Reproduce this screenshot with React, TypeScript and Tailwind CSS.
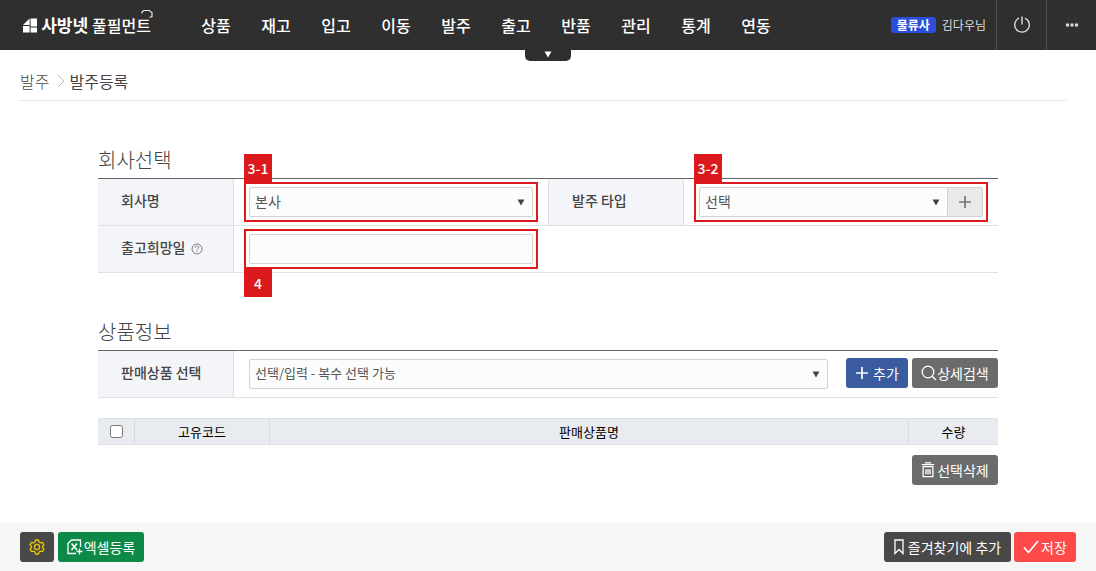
import { useState } from "react";
import type { ReactNode } from "react";

const menus = ["상품", "재고", "입고", "이동", "발주", "출고", "반품", "관리", "통계", "연동"];

// ----------------------------- icons -----------------------------
const LogoMark = () => (
  <svg width="15" height="15" viewBox="0 0 15 15" fill="#fff" aria-hidden="true">
    <path d="M7 0v7H0z" />
    <path d="M8 0h7v8.500H8zM0 8h7v7H0zM8 9.500h7V15H8z" />
  </svg>
);

const LogoCap = () => (
  <svg className="absolute -top-1 -right-0.5" width="12" height="10" viewBox="0 0 12 10" fill="none" stroke="#e5e5e5" strokeWidth="1.200" aria-hidden="true">
    <path d="M1 4.500V3L2.800 1.500h5.400L11 3.500v4L8.500 8.500" />
  </svg>
);

const PowerIcon = () => (
  <svg width="18" height="18" viewBox="0 0 18 18" fill="none" stroke="#ddd" strokeWidth="1.4" aria-hidden="true">
    <path d="M6 2.200a7.300 7.300 0 1 0 6 0M9 .5v8" />
  </svg>
);

const MoreIcon = () => (
  <svg width="14" height="4" viewBox="0 0 14 4" fill="#ddd" aria-hidden="true">
    <path d="M1 .5h3v3H1zM5.500.5h3v3h-3zM10 .5h3v3h-3z" />
  </svg>
);

const HelpIcon = () => (
  <svg className="mt-1" width="12" height="12" viewBox="0 0 12 12" fill="none" stroke="#808080" aria-hidden="true">
    <circle cx="6" cy="6" r="5" />
    <path d="M4.300 4.800c0-2.300 3.400-2.200 3.400-.3C7.700 5.700 6 5.700 6 7.200M6 8.200v1" />
  </svg>
);

const PlusIcon = () => (
  <svg width="14" height="14" viewBox="0 0 14 14" fill="none" stroke="currentColor" strokeWidth="1.700" aria-hidden="true">
    <path d="M7 1v12M1 7h12" />
  </svg>
);

const SearchIcon = () => (
  <svg width="16" height="16" viewBox="0 0 16 16" fill="none" stroke="currentColor" strokeWidth="1.300" aria-hidden="true">
    <circle cx="7" cy="7" r="5.800" />
    <path d="M11.200 11.200l3.800 3.800" />
  </svg>
);

const TrashIcon = () => (
  <svg width="14" height="16" viewBox="0 0 14 16" fill="none" stroke="currentColor" strokeWidth="1.300" aria-hidden="true">
    <path d="M.8 2.700h12.400M4 .9h6M2.100 4.700h9.800v10H2.100zM5 7.200v5M7 7.200v5M9 7.200v5" />
  </svg>
);

const GearIcon = () => (
  <svg width="16" height="16" viewBox="0 0 16 16" fill="none" stroke="#e8c500" strokeWidth="1.300" strokeLinejoin="round" aria-hidden="true">
    <path d="M6.500 1h3l.5 2 1.500.9 2-.6L15 5.800 13.600 7.200v1.600L15 10.200l-1.500 2.500-2-.6-1.500.9-.5 2h-3L6 13l-1.500-.9-2 .6L1 10.200l1.400-1.400V7.200L1 5.800l1.500-2.500 2 .6L6 3z" />
    <circle cx="8" cy="8" r="2.600" />
  </svg>
);

const ExcelIcon = () => (
  <svg width="16" height="16" viewBox="0 0 16 16" fill="none" stroke="currentColor" strokeWidth="1.300" aria-hidden="true">
    <path d="M13.500 8V1H4.500L1 4.500V14.500h8M12.500 9.500v6M9.500 12.500h6" />
    <path d="M4.500 4.500l5.500 6.500M10 4.500L4.500 11" strokeWidth="1.600" />
  </svg>
);

const BookmarkIcon = () => (
  <svg width="10" height="16" viewBox="0 0 10 16" fill="none" stroke="currentColor" strokeWidth="1.300" aria-hidden="true">
    <path d="M1 1h8v13.500L5 10.500l-4 4z" />
  </svg>
);

const CheckIcon = () => (
  <svg width="16" height="14" viewBox="0 0 16 14" fill="none" stroke="currentColor" strokeWidth="1.700" aria-hidden="true">
    <path d="M1 7.500L5.500 12.500 15 1" />
  </svg>
);

const CaretDown = ({ className = "" }: { className?: string }) => (
  <svg className={className} width="8" height="7" viewBox="0 0 8 7" aria-hidden="true">
    <path d="M.5.5h7L4 6.500z" fill="currentColor" />
  </svg>
);

// ----------------------------- parts -----------------------------
interface SelectBoxProps {
  id: string;
  options: string[];
  className?: string;
}

function SelectBox({ id, options, className = "text-sm" }: SelectBoxProps) {
  return (
    <div className="relative min-w-0 flex-1">
      <select
        id={id}
        className={`block h-[30px] w-full appearance-none rounded-xs border border-[#d3d3d3] bg-[#fcfcfc] px-[5px] pb-0.5 text-[#555] ${className}`}
      >
        {options.map((option) => (
          <option key={option}>{option}</option>
        ))}
      </select>
      <CaretDown className="pointer-events-none absolute top-3 right-2 text-[#444]" />
    </div>
  );
}

interface CalloutProps {
  label: string;
  below?: boolean;
  children: ReactNode;
}

// 입력 영역을 감싸는 빨간 안내 테두리 + 번호
function Callout({ label, below = false, children }: CalloutProps) {
  return (
    <div className="relative flex flex-1">
      {children}
      <div className="pointer-events-none absolute -inset-[5px] border-2 border-[#dc1a1e]" />
      <span
        className={`absolute -left-[5px] flex size-7 items-center justify-center bg-[#dc1a1e] text-sm font-medium text-white ${below ? "top-[35px]" : "bottom-[35px]"}`}
      >
        {label}
      </span>
    </div>
  );
}

interface FieldLabelProps {
  htmlFor: string;
  className?: string;
  children: ReactNode;
}

function FieldLabel({ htmlFor, className = "", children }: FieldLabelProps) {
  return (
    <label
      htmlFor={htmlFor}
      className={`flex w-[136px] shrink-0 items-center gap-1.5 border-r border-[#dfe1e4] bg-[#f4f5f8] pb-1 text-sm font-medium text-[#444] ${className}`}
    >
      {children}
    </label>
  );
}

function SectionTitle({ children }: { children: ReactNode }) {
  return <h2 className="border-b border-[#666] pt-0.5 pb-0.5 text-xl leading-8 font-light text-[#444]">{children}</h2>;
}

interface ButtonProps {
  className: string;
  children: ReactNode;
  label?: string;
}

function Button({ className, children, label }: ButtonProps) {
  return (
    <button
      type="button"
      aria-label={label}
      className={`flex h-[30px] shrink-0 items-center justify-center rounded-[3px] text-sm whitespace-nowrap text-white ${className}`}
    >
      {children}
    </button>
  );
}

// ----------------------------- page -----------------------------
export default function App() {
  const [checked, setChecked] = useState(false);
  const [date, setDate] = useState("");

  return (
    <div className="flex min-h-screen flex-col bg-white font-['Noto_Sans_CJK_KR',sans-serif]">
      <header className="relative flex h-[50px] items-center bg-[#2f2f2f] text-white">
        <a href="#" className="relative ml-[23px] flex w-[128px] items-center gap-1 whitespace-nowrap">
          <LogoMark />
          <span className="text-[17px] leading-6 font-bold">사방넷</span>
          <span className="text-base leading-6 font-medium">풀필먼트</span>
          <LogoCap />
        </a>
        <nav className="ml-[35px] flex">
          {menus.map((menu) => (
            <a key={menu} href="#" className="w-[60px] text-center text-base font-medium whitespace-nowrap">
              {menu}
            </a>
          ))}
        </nav>
        <div className="ml-auto flex h-full items-center">
          <span className="flex h-4 w-[45px] items-center justify-center rounded-[3px] bg-[#2b4fdb] text-xs font-bold">
            물류사
          </span>
          <span className="mr-2.5 ml-1.5 text-xs text-[#ddd]">김다우님</span>
          <button type="button" aria-label="로그아웃" className="flex h-full w-[50px] items-center justify-center border-l border-[#505050]">
            <PowerIcon />
          </button>
          <button type="button" aria-label="더보기" className="flex h-full w-[50px] items-center justify-center border-l border-[#505050]">
            <MoreIcon />
          </button>
        </div>
        <button
          type="button"
          aria-label="메뉴 펼치기"
          className="absolute top-full left-1/2 flex h-[11px] w-[46px] -translate-x-1/2 justify-center rounded-b-[5px] bg-[#2f2f2f] pt-px"
        >
          <CaretDown />
        </button>
      </header>

      <main className="flex-1 px-5 pb-8">
        <div className="mr-[9px] flex h-[51px] items-center gap-1 border-b border-[#e6e6e6] pt-3 text-base text-[#444]">
          <span className="font-light">발주</span>
          <svg className="ml-1" width="8" height="14" viewBox="0 0 8 14" fill="none" stroke="#bbb" aria-hidden="true">
            <path d="M1 1l6 6-6 6" />
          </svg>
          <h1>발주등록</h1>
        </div>

        <div className="mx-auto mt-[41px] max-w-[900px]">
          {/* 회사선택 */}
          <section>
            <SectionTitle>회사선택</SectionTitle>
            <div className="flex h-[47px] border-b border-[#dfe1e4]">
              <div className="flex w-1/2">
                <FieldLabel htmlFor="company" className="pl-[23px]">회사명</FieldLabel>
                <div className="flex flex-1 items-center px-[15px]">
                  <Callout label="3-1">
                    <SelectBox id="company" options={["본사"]} />
                  </Callout>
                </div>
              </div>
              <div className="flex w-1/2">
                <FieldLabel htmlFor="orderType" className="border-l pl-[23px]">발주 타입</FieldLabel>
                <div className="flex flex-1 items-center px-[15px]">
                  <Callout label="3-2">
                    <SelectBox id="orderType" options={["선택"]} />
                    <button
                      type="button"
                      aria-label="발주 타입 추가"
                      className="-ml-px flex h-[30px] w-9 items-center justify-center rounded-r-xs border border-[#d3d3d3] bg-[#e9e9e9] text-[#777]"
                    >
                      <PlusIcon />
                    </button>
                  </Callout>
                </div>
              </div>
            </div>
            <div className="flex h-[47px] border-b border-[#dfe1e4]">
              <div className="flex w-1/2">
                <FieldLabel htmlFor="releaseDate" className="pl-[23px]">
                  출고희망일
                  <HelpIcon />
                </FieldLabel>
                <div className="flex flex-1 items-center px-[15px]">
                  <Callout label="4" below>
                    <input
                      id="releaseDate"
                      type="text"
                      value={date}
                      onChange={(e) => setDate(e.target.value)}
                      className="h-[30px] w-full rounded-xs border border-[#d3d3d3] bg-[#fcfcfc] px-[5px] text-sm text-[#555]"
                    />
                  </Callout>
                </div>
              </div>
            </div>
          </section>

          {/* 상품정보 */}
          <section className="mt-[41px]">
            <SectionTitle>상품정보</SectionTitle>
            <div className="flex h-[47px] border-b border-[#dfe1e4]">
              <FieldLabel htmlFor="product" className="pl-[23px]">판매상품 선택</FieldLabel>
              <div className="flex flex-1 items-center pl-[15px]">
                <SelectBox id="product" options={["선택/입력 - 복수 선택 가능"]} className="text-[13px]" />
                <div className="flex gap-1 pb-0.5 pl-[18px]">
                  <Button className="w-[62px] gap-1 bg-[#3a5ba0]">
                    <PlusIcon />
                    추가
                  </Button>
                  <Button className="w-[86px] bg-[#6b6b6b]">
                    <SearchIcon />
                    상세검색
                  </Button>
                </div>
              </div>
            </div>

            <table className="mt-5 w-full table-fixed border-separate border-spacing-0 border-y border-[#dfe1e4] bg-[#e8ebf0] text-[13px] text-black">
              <thead>
                <tr className="h-[25px]">
                  <th className="w-[37px] border-r border-[#d9dbe0]">
                    <input
                      type="checkbox"
                      aria-label="전체 선택"
                      checked={checked}
                      onChange={(e) => setChecked(e.target.checked)}
                      className="mx-auto block size-[13px]"
                    />
                  </th>
                  <th className="w-[135px] border-r border-[#d9dbe0] leading-5 font-normal">고유코드</th>
                  <th className="border-r border-[#d9dbe0] leading-5 font-normal">판매상품명</th>
                  <th className="w-[89px] leading-5 font-normal">수량</th>
                </tr>
              </thead>
            </table>

            <div className="mt-2.5 flex justify-end">
              <Button className="w-[86px] gap-0.5 bg-[#6b6b6b]">
                <TrashIcon />
                선택삭제
              </Button>
            </div>
          </section>
        </div>
      </main>

      <footer className="sticky bottom-0 flex h-12 items-center justify-between bg-[#f6f6f6] px-5">
        <div className="flex gap-1">
          <Button className="w-[34px] bg-[#484848]" label="설정">
            <GearIcon />
          </Button>
          <Button className="w-[86px] gap-px bg-[#0d8a48]">
            <ExcelIcon />
            엑셀등록
          </Button>
        </div>
        <div className="flex gap-[3px]">
          <Button className="w-[127px] gap-1 bg-[#484848]">
            <BookmarkIcon />
            즐겨찾기에 추가
          </Button>
          <Button className="w-[62px] gap-0.5 bg-[#ff4a4a]">
            <CheckIcon />
            저장
          </Button>
        </div>
      </footer>
    </div>
  );
}
